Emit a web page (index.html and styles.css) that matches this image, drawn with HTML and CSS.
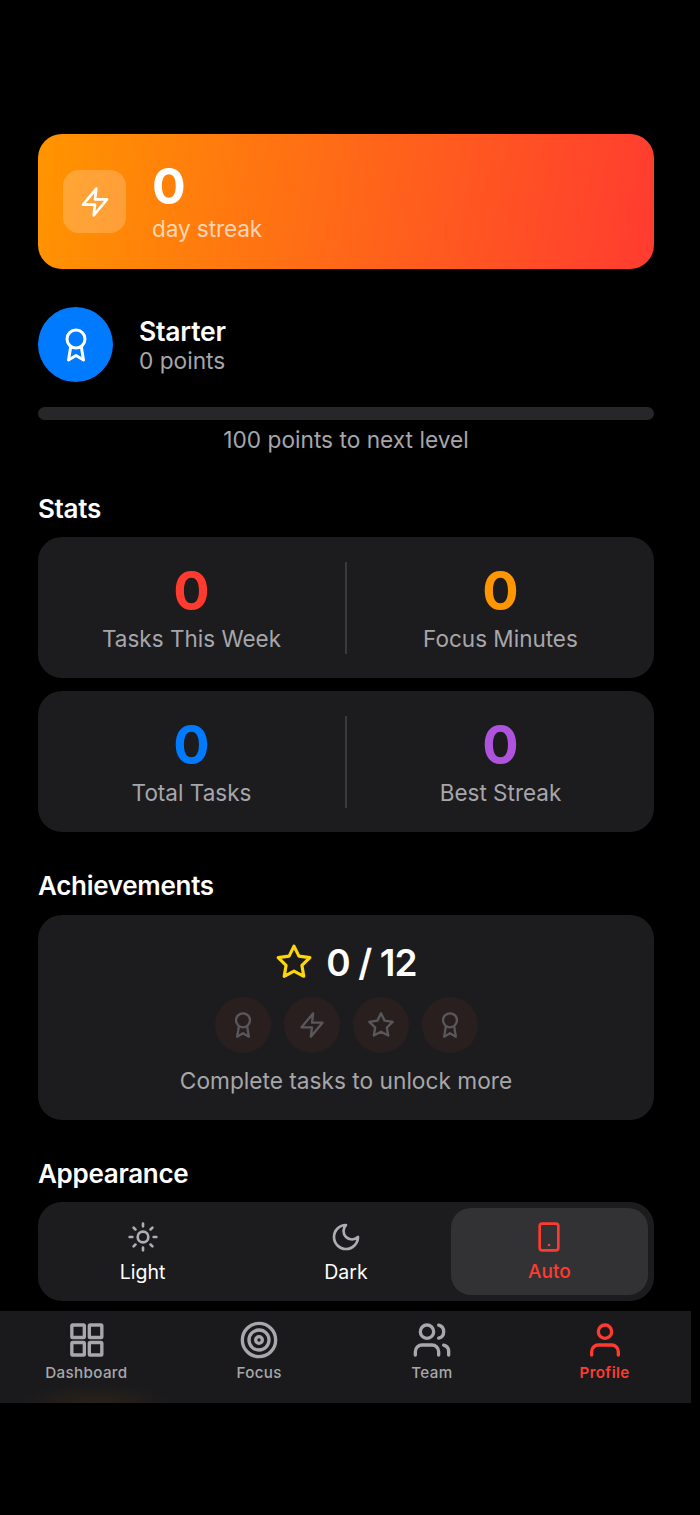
FILE: index.html
```html
<!DOCTYPE html>
<html lang="en">
<head>
<meta charset="utf-8">
<title>Profile</title>
<link rel="stylesheet" href="styles.css">
</head>
<body>
<main class="content">
  <section class="streak">
    <div class="streak-icon">
      <svg viewBox="0 0 24 24" width="32" height="32" class="ico"><path d="M13 2 3 14h9l-1 8 10-12h-9l1-8z"/></svg>
    </div>
    <div class="streak-text">
      <div class="streak-num">0</div>
      <div class="streak-label">day streak</div>
    </div>
  </section>

  <section class="level">
    <div class="level-badge">
      <svg viewBox="0 0 24 24" width="36" height="36" class="ico"><circle cx="12" cy="8" r="6"/><path d="M15.500 13 17 22l-5-3-5 3 1.500-9"/></svg>
    </div>
    <div class="level-text">
      <div class="level-name">Starter</div>
      <div class="level-points">0 points</div>
    </div>
  </section>
  <div class="progress"></div>
  <p class="progress-note">100 points to next level</p>

  <h2 class="heading heading-stats">Stats</h2>
  <div class="stat-card">
    <div class="stat"><div class="stat-num red">0</div><div class="stat-label">Tasks This Week</div></div>
    <div class="stat-sep"></div>
    <div class="stat"><div class="stat-num orange">0</div><div class="stat-label">Focus Minutes</div></div>
  </div>
  <div class="stat-card">
    <div class="stat"><div class="stat-num blue">0</div><div class="stat-label">Total Tasks</div></div>
    <div class="stat-sep"></div>
    <div class="stat"><div class="stat-num purple">0</div><div class="stat-label">Best Streak</div></div>
  </div>

  <h2 class="heading heading-ach">Achievements</h2>
  <section class="ach">
    <div class="ach-top">
      <svg viewBox="0 0 24 24" width="38" height="38" class="ico star"><path d="m12 2 3.090 6.260L22 9.270l-5 4.870 1.180 6.880L12 17.770l-6.180 3.250L7 14.140 2 9.270l6.910-1.010L12 2z"/></svg>
      <span class="ach-count">0 / 12</span>
    </div>
    <div class="ach-badges">
      <div class="ach-badge"><svg viewBox="0 0 24 24" width="28" height="28" class="ico"><circle cx="12" cy="8" r="6"/><path d="M15.500 13 17 22l-5-3-5 3 1.500-9"/></svg></div>
      <div class="ach-badge"><svg viewBox="0 0 24 24" width="28" height="28" class="ico"><path d="M13 2 3 14h9l-1 8 10-12h-9l1-8z"/></svg></div>
      <div class="ach-badge"><svg viewBox="0 0 24 24" width="28" height="28" class="ico"><path d="m12 2 3.090 6.260L22 9.270l-5 4.870 1.180 6.880L12 17.770l-6.180 3.250L7 14.140 2 9.270l6.910-1.010L12 2z"/></svg></div>
      <div class="ach-badge"><svg viewBox="0 0 24 24" width="28" height="28" class="ico"><circle cx="12" cy="8" r="6"/><path d="M15.500 13 17 22l-5-3-5 3 1.500-9"/></svg></div>
    </div>
    <p class="ach-note">Complete tasks to unlock more</p>
  </section>

  <h2 class="heading heading-app">Appearance</h2>
  <section class="segments">
    <div class="segment">
      <svg viewBox="0 0 24 24" width="32" height="32" class="ico seg-ico"><circle cx="12" cy="12" r="4"/><path d="M12 2v2M12 20v2M4.930 4.930l1.410 1.410M17.660 17.660l1.410 1.410M2 12h2M20 12h2M6.340 17.660l-1.410 1.410M19.070 4.930l-1.410 1.410"/></svg>
      <span>Light</span>
    </div>
    <div class="segment">
      <svg viewBox="0 0 24 24" width="32" height="32" class="ico seg-ico"><path d="M12 3a6 6 0 0 0 9 9 9 9 0 1 1-9-9z"/></svg>
      <span>Dark</span>
    </div>
    <div class="segment segment-on">
      <svg viewBox="0 0 24 24" width="32" height="32" class="ico"><rect x="5" y="2" width="14" height="20" rx="2"/><path d="M12 18h.01"/></svg>
      <span>Auto</span>
    </div>
  </section>
</main>

<nav class="tabbar">
  <div class="tab">
    <svg viewBox="0 0 24 24" width="40" height="40" class="ico"><rect x="3.500" y="3" width="7.500" height="7.500" rx="0.500"/><rect x="14" y="3" width="7.500" height="7.500" rx="0.500"/><rect x="3.500" y="13.500" width="7.500" height="7.500" rx="0.500"/><rect x="14" y="13.500" width="7.500" height="7.500" rx="0.500"/></svg>
    <span>Dashboard</span>
  </div>
  <div class="tab">
    <svg viewBox="0 0 24 24" width="40" height="40" class="ico"><circle cx="12" cy="12" r="10"/><circle cx="12" cy="12" r="6"/><circle cx="12" cy="12" r="2"/></svg>
    <span>Focus</span>
  </div>
  <div class="tab">
    <svg viewBox="0 0 24 24" width="40" height="40" class="ico"><path d="M16 21v-2a4 4 0 0 0-4-4H6a4 4 0 0 0-4 4v2"/><circle cx="9" cy="7" r="4"/><path d="M22 21v-2a4 4 0 0 0-3-3.870M16 3.130a4 4 0 0 1 0 7.750"/></svg>
    <span>Team</span>
  </div>
  <div class="tab tab-on">
    <svg viewBox="0 0 24 24" width="40" height="40" class="ico"><path d="M20 21v-2a4 4 0 0 0-4-4H8a4 4 0 0 0-4 4v2"/><circle cx="12" cy="7" r="4"/></svg>
    <span>Profile</span>
  </div>
</nav>
</body>
</html>
```
FILE: styles.css
```css
* { box-sizing: border-box; }
html, body { margin: 0; padding: 0; }
body {
  width: 700px;
  height: 1515px;
  background: #000;
  color: #fff;
  font-family: Inter, "Liberation Sans", sans-serif;
  overflow: hidden;
}
.ico {
  fill: none;
  stroke: currentColor;
  stroke-width: 2;
  stroke-linecap: round;
  stroke-linejoin: round;
  display: block;
  flex: none;
}
.content { padding: 134px 46px 0 38px; }

.streak {
  height: 135px;
  border-radius: 24px;
  background: linear-gradient(100deg, #ff9500, #ff3b30);
  display: flex;
  align-items: center;
  gap: 26px;
  padding: 0 25px;
}
.streak-icon {
  width: 63px;
  height: 63px;
  border-radius: 16px;
  background: rgba(255, 255, 255, 0.2);
  display: flex;
  align-items: center;
  justify-content: center;
}
.streak-num { font-size: 50px; font-weight: 700; line-height: 52px; }
.streak-label { font-size: 22.600px; line-height: 30px; margin-top: 2px; color: rgba(255, 255, 255, 0.7); letter-spacing: -0.1px; }

.level { display: flex; align-items: center; gap: 26px; margin-top: 38px; }
.level-badge {
  width: 75px;
  height: 75px;
  border-radius: 50%;
  background: #007aff;
  display: flex;
  align-items: center;
  justify-content: center;
}
.level-text { padding-top: 2px; }
.level-name { font-size: 26.500px; font-weight: 600; line-height: 31px; letter-spacing: -0.2px; }
.level-points { font-size: 22.700px; line-height: 28px; color: #a6a6ab; }

.progress { height: 13px; border-radius: 7px; background: #27272a; margin-top: 25px; }
.progress-note { margin: 6px 0 0; text-align: center; font-size: 22.700px; line-height: 28px; color: #a6a6ab; }

.heading { margin: 0; font-size: 26px; font-weight: 600; line-height: 32px; letter-spacing: -0.3px; }
.heading-stats { margin-top: 39px; }
.heading-ach { margin-top: 38px; }
.heading-app { margin-top: 38px; }

.stat-card {
  height: 141px;
  margin-top: 13px;
  border-radius: 24px;
  background: #1c1c1e;
  display: flex;
  align-items: center;
}
.heading + .stat-card { margin-top: 12px; }
.stat { flex: 1; text-align: center; }
.stat-num { font-size: 54px; font-weight: 700; line-height: 58px; }
.stat-label { font-size: 22.500px; line-height: 28px; margin-top: 5px; color: #a6a6ab; }
.stat-sep { width: 2px; height: 92px; background: #3a3a3c; }
.red { color: #ff3b30; }
.orange { color: #ff9500; }
.blue { color: #007aff; }
.purple { color: #af52de; }

.ach {
  margin-top: 13px;
  height: 205px;
  border-radius: 24px;
  background: #1c1c1e;
  padding-top: 23px;
  display: flex;
  flex-direction: column;
  align-items: center;
}
.ach-top { display: flex; align-items: center; gap: 13px; height: 48px; }
.star { color: #ffd60a; }
.ach-count { font-size: 37px; font-weight: 600; letter-spacing: -0.9px; }
.ach-badges { display: flex; gap: 13px; margin-top: 11px; }
.ach-badge {
  width: 56px;
  height: 56px;
  border-radius: 50%;
  background: #2a1f1f;
  color: #58585c;
  display: flex;
  align-items: center;
  justify-content: center;
}
.ach-note { margin: 14px 0 0; font-size: 22.700px; line-height: 28px; color: #a6a6ab; }

.segments {
  margin-top: 12px;
  height: 99px;
  border-radius: 24px;
  background: #1c1c1e;
  padding: 6px;
  display: flex;
  gap: 6px;
}
.segment {
  flex: 1;
  border-radius: 20px;
  display: flex;
  flex-direction: column;
  align-items: center;
  justify-content: center;
  gap: 7px;
  padding-top: 2px;
  font-size: 19.500px;
  line-height: 24px;
  font-weight: 400;
}
.seg-ico { color: #aeaeb2; }
.segment-on { background: #323234; color: #ff3b30; font-size: 19px; font-weight: 500; }

.tabbar {
  position: absolute;
  left: 0;
  top: 1311px;
  width: 691px;
  height: 92px;
  background:
    radial-gradient(ellipse 75px 20px at 95px 100%, rgba(120, 75, 15, 0.16), transparent),
    #1a1a1c;
  display: flex;
}
.tab {
  flex: 1;
  display: flex;
  flex-direction: column;
  align-items: center;
  padding-top: 9px;
  gap: 3px;
  font-size: 15.200px;
  line-height: 20px;
  font-weight: 500;
  letter-spacing: 0.35px;
  color: #a8a8ac;
}
.tab-on { color: #ff3b30; font-weight: 600; }
```
